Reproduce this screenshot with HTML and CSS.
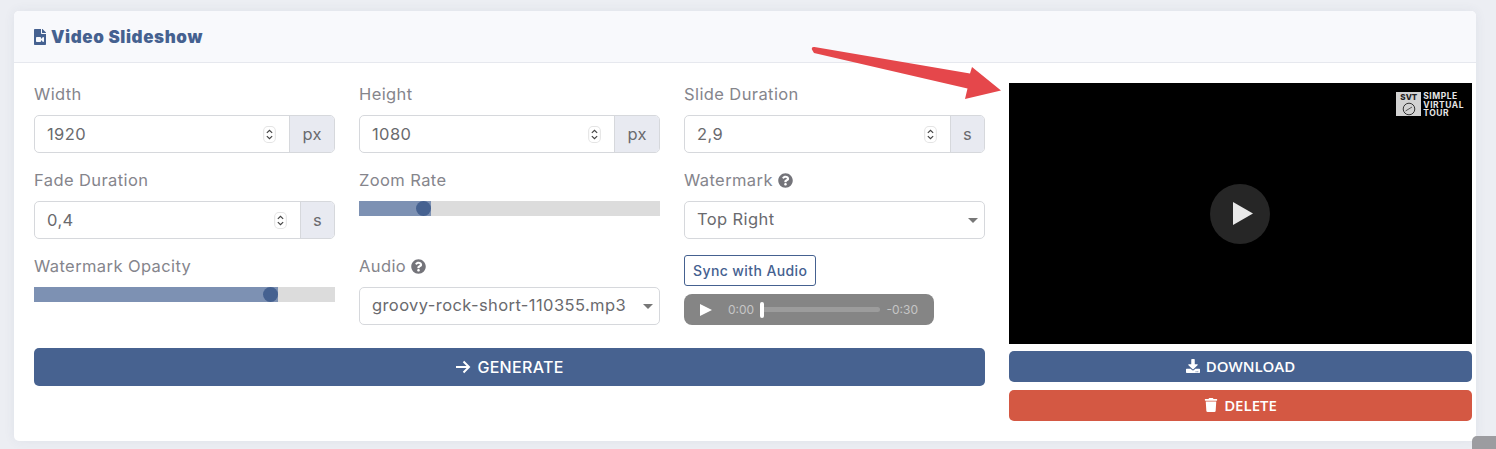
FILE: index.html
```html
<!DOCTYPE html>
<html lang="en">
<head>
    <meta charset="UTF-8">
    <title>Video Slideshow</title>
    <link rel="stylesheet" href="styles.css">
</head>
<body>
    <div class="card">
        <div class="card-header">
            <svg class="title-icon" viewBox="0 0 384 512"><path fill="currentColor" d="M384 121.941V128H256V0h6.059c6.365 0 12.47 2.529 16.971 7.029l97.941 97.941A24.005 24.005 0 0 1 384 121.941zM224 136V0H24C10.745 0 0 10.745 0 24v464c0 13.255 10.745 24 24 24h336c13.255 0 24-10.745 24-24V160H248c-13.2 0-24-10.8-24-24zm96 144.016v111.963c0 21.445-25.943 31.998-40.971 16.971L224 353.941V392c0 13.255-10.745 24-24 24H88c-13.255 0-24-10.745-24-24V280c0-13.255 10.745-24 24-24h112c13.255 0 24 10.745 24 24v38.059l55.029-55.013c15.011-15.01 40.971-4.491 40.971 16.97z"/></svg>
            <h3>Video Slideshow</h3>
        </div>
        <div class="card-body">
            <div class="settings">
                <div class="fields">
                    <div class="field">
                        <label>Width</label>
                        <div class="input-group">
                            <span class="value">1920</span>
                            <svg class="spin" viewBox="0 0 12 16"><rect x="0.5" y="0.5" width="11" height="15" rx="4" fill="#fff" stroke="#e4e4e4"/><path d="M3.5 6.5L6 4l2.5 2.5M3.5 9.5L6 12l2.5-2.5" fill="none" stroke="#444" stroke-width="1.1"/></svg>
                            <span class="addon">px</span>
                        </div>
                    </div>
                    <div class="field">
                        <label>Height</label>
                        <div class="input-group">
                            <span class="value">1080</span>
                            <svg class="spin" viewBox="0 0 12 16"><rect x="0.5" y="0.5" width="11" height="15" rx="4" fill="#fff" stroke="#e4e4e4"/><path d="M3.5 6.5L6 4l2.5 2.5M3.5 9.5L6 12l2.5-2.5" fill="none" stroke="#444" stroke-width="1.1"/></svg>
                            <span class="addon">px</span>
                        </div>
                    </div>
                    <div class="field">
                        <label>Slide Duration</label>
                        <div class="input-group">
                            <span class="value">2,9</span>
                            <svg class="spin" viewBox="0 0 12 16"><rect x="0.5" y="0.5" width="11" height="15" rx="4" fill="#fff" stroke="#e4e4e4"/><path d="M3.5 6.5L6 4l2.5 2.5M3.5 9.5L6 12l2.5-2.5" fill="none" stroke="#444" stroke-width="1.1"/></svg>
                            <span class="addon">s</span>
                        </div>
                    </div>
                    <div class="field">
                        <label>Fade Duration</label>
                        <div class="input-group">
                            <span class="value">0,4</span>
                            <svg class="spin" viewBox="0 0 12 16"><rect x="0.5" y="0.5" width="11" height="15" rx="4" fill="#fff" stroke="#e4e4e4"/><path d="M3.5 6.5L6 4l2.5 2.5M3.5 9.5L6 12l2.5-2.5" fill="none" stroke="#444" stroke-width="1.1"/></svg>
                            <span class="addon">s</span>
                        </div>
                    </div>
                    <div class="field">
                        <label>Zoom Rate</label>
                        <div class="slider"><div class="slider-fill" style="width: 72px"><span class="thumb"></span></div></div>
                    </div>
                    <div class="field">
                        <label>Watermark
                            <svg class="help" viewBox="0 0 512 512"><path fill="currentColor" d="M504 256c0 136.997-111.043 248-248 248S8 392.997 8 256C8 119.083 119.043 8 256 8s248 111.083 248 248zM262.655 90c-54.497 0-89.255 22.957-116.549 63.758-3.536 5.286-2.353 12.415 2.715 16.258l34.699 26.31c5.205 3.947 12.621 3.008 16.665-2.122 17.864-22.658 30.113-35.797 57.303-35.797 20.429 0 45.698 13.148 45.698 32.958 0 14.976-12.363 22.667-32.534 33.976C247.128 238.528 216 254.941 216 296v4c0 6.627 5.373 12 12 12h56c6.627 0 12-5.373 12-12v-1.333c0-28.462 83.186-29.647 83.186-106.667 0-58.002-60.165-102-116.531-102zM256 338c-25.365 0-46 20.635-46 46 0 25.364 20.635 46 46 46s46-20.636 46-46c0-25.365-20.635-46-46-46z"/></svg>
                        </label>
                        <div class="select"><span class="value">Top Right</span><span class="caret"></span></div>
                    </div>
                    <div class="field">
                        <label>Watermark Opacity</label>
                        <div class="slider"><div class="slider-fill" style="width: 244px"><span class="thumb"></span></div></div>
                    </div>
                    <div class="field">
                        <label>Audio
                            <svg class="help" viewBox="0 0 512 512"><path fill="currentColor" d="M504 256c0 136.997-111.043 248-248 248S8 392.997 8 256C8 119.083 119.043 8 256 8s248 111.083 248 248zM262.655 90c-54.497 0-89.255 22.957-116.549 63.758-3.536 5.286-2.353 12.415 2.715 16.258l34.699 26.31c5.205 3.947 12.621 3.008 16.665-2.122 17.864-22.658 30.113-35.797 57.303-35.797 20.429 0 45.698 13.148 45.698 32.958 0 14.976-12.363 22.667-32.534 33.976C247.128 238.528 216 254.941 216 296v4c0 6.627 5.373 12 12 12h56c6.627 0 12-5.373 12-12v-1.333c0-28.462 83.186-29.647 83.186-106.667 0-58.002-60.165-102-116.531-102zM256 338c-25.365 0-46 20.635-46 46 0 25.364 20.635 46 46 46s46-20.636 46-46c0-25.365-20.635-46-46-46z"/></svg>
                        </label>
                        <div class="select"><span class="value">groovy-rock-short-110355.mp3</span><span class="caret"></span></div>
                    </div>
                    <div class="field">
                        <button class="btn-sync">Sync with Audio</button>
                        <div class="audio-player">
                            <svg class="audio-play" viewBox="0 0 12 12"><path fill="#fff" d="M0 0l12 6-12 6z"/></svg>
                            <span class="audio-time">0:00</span>
                            <div class="audio-track"><span class="audio-knob"></span></div>
                            <span class="audio-time">-0:30</span>
                        </div>
                    </div>
                </div>
                <button class="btn btn-generate">
                    <svg class="arrow-icon" viewBox="0 0 16 14"><path d="M1 7h13M8.500 1.500L14 7l-5.500 5.500" fill="none" stroke="currentColor" stroke-width="2"/></svg>
                    GENERATE
                </button>
            </div>
            <div class="preview">
                <div class="video">
                    <div class="wm">
                        <div class="wm-box">
                            <span class="wm-svt">SVT</span>
                            <svg class="wm-dial" viewBox="0 0 14 14"><circle cx="7" cy="7" r="5.800" fill="none" stroke="#333" stroke-width="1"/><path d="M3.500 9L10 5" stroke="#333" stroke-width="0.8"/></svg>
                        </div>
                        <div class="wm-text">SIMPLE<br>VIRTUAL<br>TOUR</div>
                    </div>
                    <div class="big-play">
                        <svg viewBox="0 0 20 23"><path fill="#e8e8e8" d="M0 0l20 11.500L0 23z"/></svg>
                    </div>
                </div>
                <button class="btn btn-small">
                    <svg class="btn-icon" viewBox="0 0 512 512"><path fill="currentColor" d="M216 0h80c13.300 0 24 10.700 24 24v168h87.700c17.800 0 26.700 21.500 14.100 34.100L269.700 378.300c-7.500 7.500-19.800 7.500-27.300 0L90.100 226.100c-12.600-12.600-3.700-34.100 14.100-34.100H192V24c0-13.300 10.700-24 24-24zm296 376v112c0 13.300-10.700 24-24 24H24c-13.300 0-24-10.700-24-24V376c0-13.300 10.700-24 24-24h146.700l49 49c20.100 20.100 52.500 20.100 72.600 0l49-49H488c13.300 0 24 10.700 24 24zm-124 88c0-11-9-20-20-20s-20 9-20 20 9 20 20 20 20-9 20-20zm64 0c0-11-9-20-20-20s-20 9-20 20 9 20 20 20 20-9 20-20z"/></svg>
                    DOWNLOAD
                </button>
                <button class="btn btn-small btn-delete">
                    <svg class="btn-icon" viewBox="0 0 448 512"><path fill="currentColor" d="M432 32H312l-9.400-18.700A24 24 0 0 0 281.100 0H166.800a23.720 23.720 0 0 0-21.400 13.300L136 32H16A16 16 0 0 0 0 48v32a16 16 0 0 0 16 16h416a16 16 0 0 0 16-16V48a16 16 0 0 0-16-16zM53.200 467a48 48 0 0 0 47.900 45h245.800a48 48 0 0 0 47.900-45L416 128H32z"/></svg>
                    DELETE
                </button>
            </div>
        </div>
    </div>

    <!-- annotation drawn on top of the screenshot -->
    <svg class="annotation" viewBox="0 0 200 60"><path fill="#e5474b" d="M1.500 5.500C0 3.500 1 1.500 3.500 2L159 28.500 161 22 190 45.500 154 54 156.500 43.500 3 8z"/></svg>
    <div class="corner"></div>
</body>
</html>
```

FILE: styles.css
```css
html, body {
    height: 100%;
}
body {
    margin: 0;
    padding: 11px 20px 0 14px;
    box-sizing: border-box;
    overflow: hidden;
    background-color: #eceef3;
    font-family: Inter, "Open Sans", sans-serif;
    color: #6e6e73;
}
.card {
    background-color: #fff;
    border-radius: 5px;
    box-shadow: 0 0 12px rgba(60, 70, 100, 0.07);
    height: 430px;
}
.card-header {
    display: flex;
    align-items: center;
    gap: 5px;
    height: 51px;
    padding: 0 20px;
    background-color: #f8f9fc;
    border-bottom: 1px solid #e6e8ee;
    border-radius: 5px 5px 0 0;
    color: #456190;
}
.card-header h3 {
    margin: 0;
    font-size: 17px;
    font-weight: 900;
    letter-spacing: 0.6px;
}
.title-icon {
    width: 12px;
    height: 16px;
}
.card-body {
    display: flex;
    gap: 24px;
    padding: 20px 4px 0 20px;
}
.settings {
    width: 951px;
}
.fields {
    display: grid;
    grid-template-columns: repeat(3, 301px);
    grid-auto-rows: 86px;
    column-gap: 24px;
}
.field label {
    display: flex;
    align-items: center;
    gap: 5px;
    height: 22px;
    margin-bottom: 10px;
    font-size: 16.5px;
    letter-spacing: 0.4px;
    color: #85858c;
}
.help {
    width: 15px;
    height: 15px;
    color: #74747a;
}
.input-group, .select {
    display: flex;
    align-items: center;
    height: 38px;
    box-sizing: border-box;
    border: 1px solid #d6d8dc;
    border-radius: 5px;
    background-color: #fff;
    font-size: 16.5px;
    letter-spacing: 0.4px;
    color: #6a6a6e;
}
.value {
    flex: 1;
    padding-bottom: 1px;
    padding-left: 12px;
}
.select .value {
    padding-bottom: 3px;
}
.spin {
    width: 13px;
    height: 17px;
    margin-right: 13px;
}
.addon {
    display: flex;
    align-items: center;
    justify-content: center;
    align-self: stretch;
    padding: 0 12px;
    background-color: #e8eaf1;
    border-left: 1px solid #d6d8dc;
    border-radius: 0 4px 4px 0;
}
.select {
    padding-right: 6px;
}
.caret {
    width: 0;
    height: 0;
    border-left: 5px solid transparent;
    border-right: 5px solid transparent;
    border-top: 5px solid #777;
}
.slider {
    height: 15px;
    background-color: #dcdcdc;
}
.slider-fill {
    display: flex;
    justify-content: flex-end;
    height: 100%;
    background-color: #7d91b3;
}
.thumb {
    width: 15px;
    height: 15px;
    border-radius: 50%;
    background-color: #456190;
}
.btn-sync {
    display: block;
    height: 31px;
    padding: 0 8px;
    border: 1px solid #456190;
    border-radius: 3px;
    background-color: #fff;
    font-family: inherit;
    font-size: 14px;
    font-weight: 500;
    letter-spacing: 0.4px;
    color: #456190;
}
.audio-player {
    display: flex;
    align-items: center;
    width: 250px;
    height: 31px;
    margin-top: 8px;
    padding: 0 16px;
    box-sizing: border-box;
    background-color: #858585;
    border-radius: 8px;
}
.audio-play {
    width: 12px;
    height: 12px;
    margin-right: 16px;
}
.audio-time {
    font-size: 12px;
    color: #c6c6c6;
}
.audio-track {
    display: flex;
    align-items: center;
    flex: 1;
    height: 5px;
    margin: 0 6px;
    background-color: #9c9c9c;
    border-radius: 3px;
}
.audio-knob {
    width: 4px;
    height: 16px;
    background-color: #fff;
    border-radius: 2px;
}
.btn {
    display: flex;
    align-items: center;
    justify-content: center;
    gap: 6px;
    width: 100%;
    border: none;
    border-radius: 5px;
    background-color: #476290;
    font-family: "Open Sans", sans-serif;
    color: #fff;
}
.btn-generate {
    height: 38px;
    margin-top: 7px;
    padding-bottom: 2px;
    font-family: Inter, sans-serif;
    font-size: 16px;
    font-weight: 500;
    letter-spacing: 0.3px;
}
.arrow-icon {
    width: 16px;
    height: 14px;
}
.preview {
    width: 463px;
}
.video {
    display: flex;
    align-items: center;
    justify-content: center;
    position: relative;
    height: 261px;
    background-color: #000;
}
.big-play {
    display: flex;
    align-items: center;
    justify-content: center;
    width: 60px;
    height: 60px;
    margin-right: 1px;
    border-radius: 50%;
    background-color: #262626;
}
.big-play svg {
    width: 20px;
    height: 23px;
    margin-left: 6px;
}
.wm {
    display: flex;
    gap: 2px;
    position: absolute;
    top: 9px;
    right: 8px;
}
.wm-box {
    display: flex;
    flex-direction: column;
    align-items: center;
    width: 25px;
    height: 24px;
    background-color: #d2d2d2;
}
.wm-svt {
    font-size: 8px;
    font-weight: 800;
    line-height: 10px;
    color: #222;
}
.wm-dial {
    width: 14px;
    height: 14px;
}
.wm-text {
    font-size: 8.500px;
    font-weight: 700;
    line-height: 8.500px;
    letter-spacing: 0.5px;
    color: #e6e6e6;
}
.btn-small {
    height: 31px;
    margin-top: 7px;
    padding-bottom: 3px;
    font-size: 15px;
    font-weight: 600;
}
.btn-delete {
    margin-top: 8px;
    background-color: #d45843;
}
.btn-icon {
    height: 14px;
    width: 14px;
}
.annotation {
    position: absolute;
    top: 45px;
    left: 811px;
    width: 200px;
    height: 60px;
}
.corner {
    position: absolute;
    top: 436px;
    left: 1472px;
    width: 24px;
    height: 13px;
    background-color: #9c9ca0;
    border-radius: 5px 0 0 0;
}
```
